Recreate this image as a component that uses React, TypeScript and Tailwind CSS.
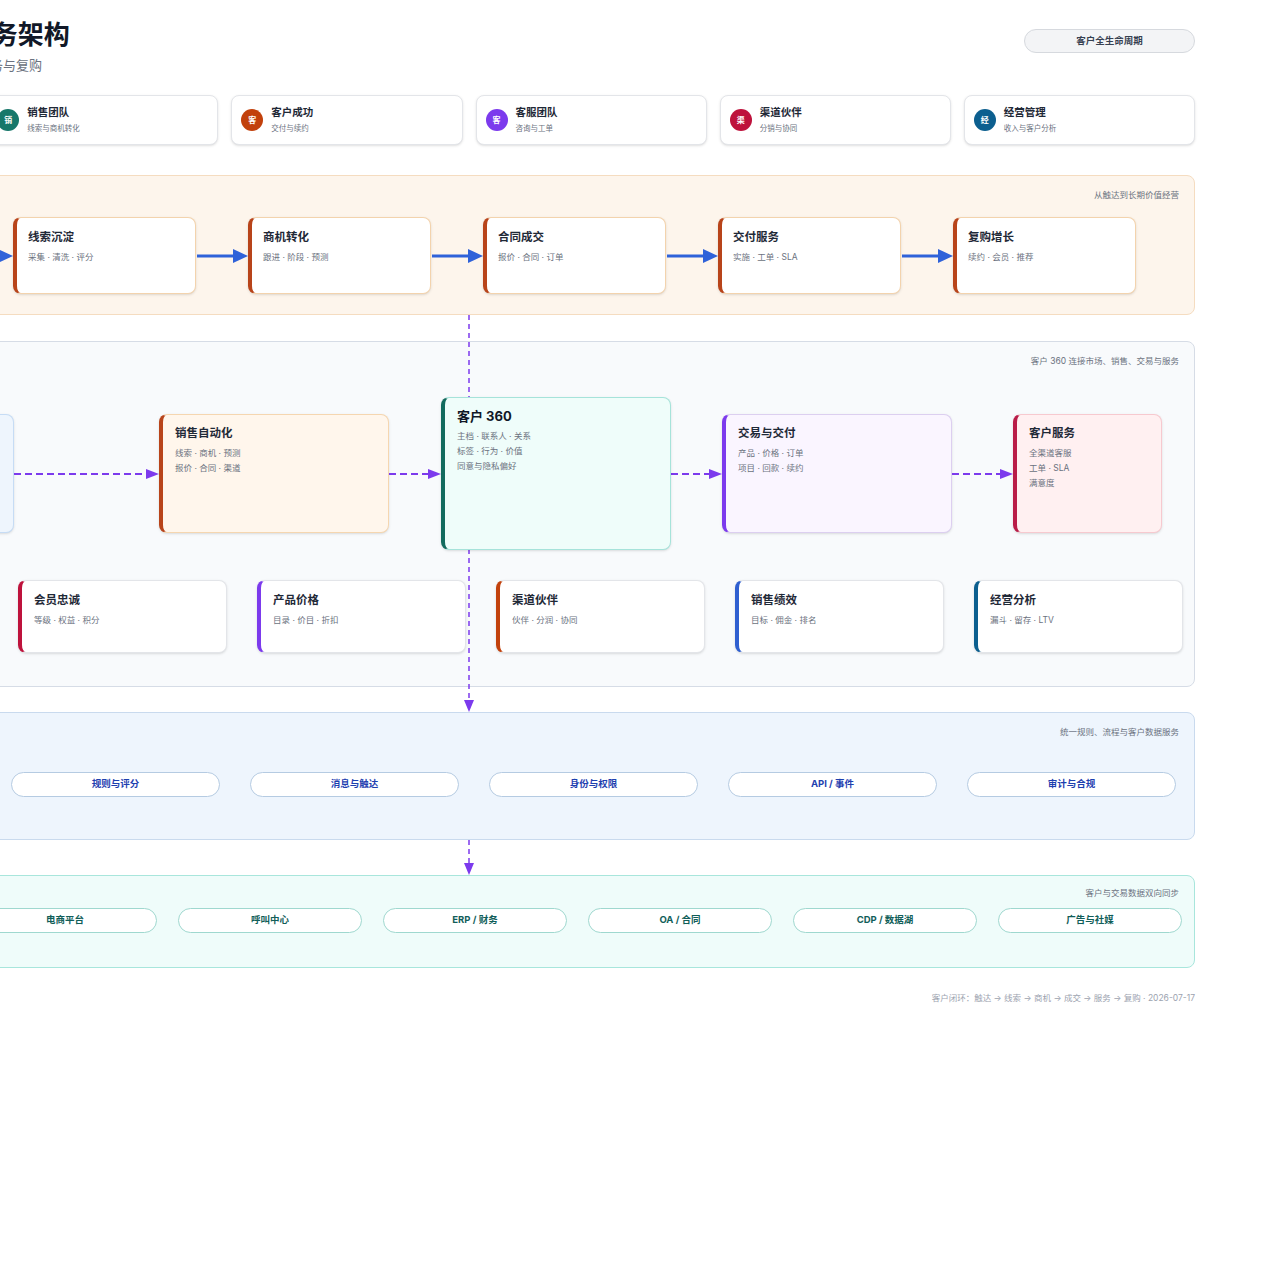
import React from "react";

const roles = [
  { ch: "市", name: "市场团队", desc: "品牌与获客", color: "bg-[#2563eb]" },
  { ch: "销", name: "销售团队", desc: "线索与商机转化", color: "bg-[#17776a]" },
  { ch: "客", name: "客户成功", desc: "交付与续约", color: "bg-[#c2410c]" },
  { ch: "客", name: "客服团队", desc: "咨询与工单", color: "bg-[#7c3aed]" },
  { ch: "渠", name: "渠道伙伴", desc: "分销与协同", color: "bg-[#be123c]" },
  { ch: "经", name: "经营管理", desc: "收入与客户分析", color: "bg-[#0c5f8f]" },
];

const lifecycle = [
  { name: "市场触达", desc: "广告 · 内容 · 活动" },
  { name: "线索沉淀", desc: "采集 · 清洗 · 评分" },
  { name: "商机转化", desc: "跟进 · 阶段 · 预测" },
  { name: "合同成交", desc: "报价 · 合同 · 订单" },
  { name: "交付服务", desc: "实施 · 工单 · SLA" },
  { name: "复购增长", desc: "续约 · 会员 · 推荐" },
];

const domains = [
  { name: "营销活动", desc: "活动 · 预算 · ROI", bar: "border-l-[#2563eb]" },
  { name: "会员忠诚", desc: "等级 · 权益 · 积分", bar: "border-l-[#be123c]" },
  { name: "产品价格", desc: "目录 · 价目 · 折扣", bar: "border-l-[#7c3aed]" },
  { name: "渠道伙伴", desc: "伙伴 · 分润 · 协同", bar: "border-l-[#c2410c]" },
  { name: "销售绩效", desc: "目标 · 佣金 · 排名", bar: "border-l-[#2f5fd0]" },
  { name: "经营分析", desc: "漏斗 · 留存 · LTV", bar: "border-l-[#0c5f8f]" },
];

const platform = ["流程引擎", "规则与评分", "消息与触达", "身份与权限", "API / 事件", "审计与合规"];
const integrations = ["官网 / 小程序", "电商平台", "呼叫中心", "ERP / 财务", "OA / 合同", "CDP / 数据湖", "广告与社媒"];

function SolidArrow() {
  return (
    <svg width="52" height="16" viewBox="0 0 52 16" className="shrink-0">
      <line x1="1" y1="8" x2="38" y2="8" stroke="#2f62d9" strokeWidth="3" />
      <polygon points="37,1 52,8 37,15" fill="#2f62d9" />
    </svg>
  );
}

function DashArrow({ w }: { w: number }) {
  return (
    <svg width={w} height="12" viewBox={`0 0 ${w} 12`} className="shrink-0">
      <line x1="0" y1="6" x2={w - 12} y2="6" stroke="#7c3aed" strokeWidth="2" strokeDasharray="7 4" />
      <polygon points={`${w - 13},1 ${w},6 ${w - 13},11`} fill="#7c3aed" />
    </svg>
  );
}

type NodeProps = {
  title: string;
  lines: string[];
  className: string;
  big?: boolean;
};

function Node({ title, lines, className, big }: NodeProps) {
  return (
    <div className={`shrink-0 rounded-lg border border-l-[4px] pl-[12px] shadow-sm ${className}`}>
      <div className={big ? "text-[13px] font-bold leading-[18px] text-[#111827]" : "text-[11.5px] font-bold leading-[16px] text-[#1f2937]"}>
        {title}
      </div>
      <div className={big ? "mt-[4px]" : "mt-[5px]"}>
        {lines.map((l) => (
          <div key={l} className="text-[8.5px] leading-[15px] text-[#6b7280]">
            {l}
          </div>
        ))}
      </div>
    </div>
  );
}

export default function App() {
  return (
    <div className="min-h-[1280px] overflow-hidden bg-white font-['Inter','Noto_Sans_CJK_SC',sans-serif]">
      <div className="relative ml-[-257px] w-[1452px] pt-[19px]">
        {/* header */}
        <div className="flex items-start justify-between">
          <div>
            <h1 className="text-[26px] font-bold leading-[32px] text-[#111827]">CRM 客户关系管理业务架构</h1>
            <p className="mt-[5px] text-[13px] leading-[18px] text-[#6b7280]">从市场获客、线索商机、合同交付到客户服务与复购</p>
          </div>
          <div className="mt-[10px] flex h-[24px] w-[171px] items-center justify-center rounded-full border border-[#d6d9de] bg-[#f3f4f6] text-[9.5px] font-semibold text-[#374151]">
            客户全生命周期
          </div>
        </div>

        {/* roles */}
        <div className="mt-[21px] flex gap-[13px]">
          {roles.map((r) => (
            <div key={r.name} className="flex h-[50px] w-[231.2px] items-center gap-[8px] rounded-lg border border-[#e3e5e9] bg-white pl-[9px] shadow-sm">
              <div className={`flex h-[22px] w-[22px] items-center justify-center rounded-full text-[8px] font-bold text-white ${r.color}`}>
                {r.ch}
              </div>
              <div>
                <div className="text-[10.5px] font-bold leading-[14px] text-[#1f2937]">{r.name}</div>
                <div className="mt-[4px] text-[7.5px] leading-[10px] text-[#6b7280]">{r.desc}</div>
              </div>
            </div>
          ))}
        </div>

        {/* lifecycle */}
        <div className="mt-[30px] h-[140px] rounded-lg border border-[#f5dcc0] bg-[#fdf5ec]">
          <div className="flex justify-end pr-[15px] pt-[13px] text-[8.5px] leading-[12px] text-[#6b7280]">从触达到长期价值经营</div>
          <div className="mt-[16px] flex items-center pl-[34px]">
            {lifecycle.map((c, i) => (
              <React.Fragment key={c.name}>
                {i > 0 && <SolidArrow />}
                <div className="h-[77px] w-[183px] shrink-0 rounded-lg border border-[#f3d3ad] border-l-[4px] border-l-[#b8441a] bg-white pl-[11px] pt-[11px] shadow-sm">
                  <div className="text-[11.5px] font-bold leading-[16px] text-[#1f2937]">{c.name}</div>
                  <div className="mt-[6px] text-[8.5px] leading-[12px] text-[#6b7280]">{c.desc}</div>
                </div>
              </React.Fragment>
            ))}
          </div>
        </div>

        {/* core */}
        <div className="mt-[26px] h-[346px] rounded-lg border border-[#d6dce6] bg-[#f8fafc]">
          <div className="flex justify-end pr-[15px] pt-[13px] text-[8.5px] leading-[12px] text-[#6b7280]">客户 360 连接市场、销售、交易与服务</div>
          <div className="mt-[30px] flex h-[153px] items-center pl-[35px]">
            <Node
              title="市场营销"
              lines={["活动 · 内容 · 渠道", "表单 · 落地页 · 归因"]}
              className="h-[119px] w-[235px] border-[#c6dcf5] border-l-[#2563eb] bg-[#eef5fd] pt-[10px]"
            />
            <DashArrow w={145} />
            <Node
              title="销售自动化"
              lines={["线索 · 商机 · 预测", "报价 · 合同 · 渠道"]}
              className="h-[119px] w-[230px] border-[#f5d6b0] border-l-[#b8441a] bg-[#fff6ec] pt-[10px]"
            />
            <DashArrow w={52} />
            <Node
              big
              title="客户 360"
              lines={["主档 · 联系人 · 关系", "标签 · 行为 · 价值", "同意与隐私偏好"]}
              className="relative z-[2] h-[153px] w-[230px] border-[#a6e3da] border-l-[#136b5e] bg-[#effdfa] pt-[9px]"
            />
            <DashArrow w={51} />
            <Node
              title="交易与交付"
              lines={["产品 · 价格 · 订单", "项目 · 回款 · 续约"]}
              className="h-[119px] w-[230px] border-[#dccff0] border-l-[#7c3aed] bg-[#faf5ff] pt-[10px]"
            />
            <DashArrow w={61} />
            <Node
              title="客户服务"
              lines={["全渠道客服", "工单 · SLA", "满意度"]}
              className="h-[119px] w-[149px] border-[#f7c9cf] border-l-[#b91c48] bg-[#fff0f1] pt-[10px]"
            />
          </div>
          <div className="mt-[30px] flex gap-[30px] pl-[35px]">
            {domains.map((d) => (
              <div key={d.name} className={`h-[73px] w-[209px] shrink-0 rounded-lg border border-[#e3e5e9] border-l-[4px] bg-white pl-[12px] pt-[11px] shadow-sm ${d.bar}`}>
                <div className="text-[11.5px] font-bold leading-[16px] text-[#1f2937]">{d.name}</div>
                <div className="mt-[6px] text-[8.5px] leading-[12px] text-[#6b7280]">{d.desc}</div>
              </div>
            ))}
          </div>
        </div>

        {/* platform */}
        <div className="mt-[25px] h-[128px] rounded-lg border border-[#c9daee] bg-[#eef5fd]">
          <div className="flex justify-end pr-[15px] pt-[13px] text-[8.5px] leading-[12px] text-[#6b7280]">统一规则、流程与客户数据服务</div>
          <div className="mt-[34px] flex gap-[30px] pl-[28px]">
            {platform.map((p) => (
              <div key={p} className="flex h-[25px] w-[209px] shrink-0 items-center justify-center rounded-full border border-[#b5cbe2] bg-white text-[9.5px] font-bold text-[#1e40af]">
                {p}
              </div>
            ))}
          </div>
        </div>

        {/* integrations */}
        <div className="mt-[35px] h-[93px] rounded-lg border border-[#a8e6dc] bg-[#effcfa]">
          <div className="flex justify-end pr-[15px] pt-[11px] text-[8.5px] leading-[12px] text-[#6b7280]">客户与交易数据双向同步</div>
          <div className="mt-[9px] flex gap-[21px] pl-[24px]">
            {integrations.map((p) => (
              <div key={p} className="flex h-[25px] w-[184px] shrink-0 items-center justify-center rounded-full border border-[#9fd8cf] bg-white text-[9.5px] font-bold text-[#115e59]">
                {p}
              </div>
            ))}
          </div>
        </div>

        <div className="mt-[24px] text-right text-[8.5px] leading-[12px] text-[#9ca3af]">
          客户闭环：触达 → 线索 → 商机 → 成交 → 服务 → 复购 · 2026-07-17
        </div>

        {/* vertical connector from lifecycle to integrations */}
        <svg className="pointer-events-none absolute left-[720px] top-[315px] z-[1]" width="12" height="560" viewBox="0 0 12 560">
          <line x1="6" y1="0" x2="6" y2="386" stroke="#7c3aed" strokeWidth="1.5" strokeDasharray="5 4" />
          <polygon points="1,385 11,385 6,397" fill="#7c3aed" />
          <line x1="6" y1="525" x2="6" y2="548" stroke="#7c3aed" strokeWidth="1.5" strokeDasharray="5 4" />
          <polygon points="1,548 11,548 6,560" fill="#7c3aed" />
        </svg>
      </div>
    </div>
  );
}
